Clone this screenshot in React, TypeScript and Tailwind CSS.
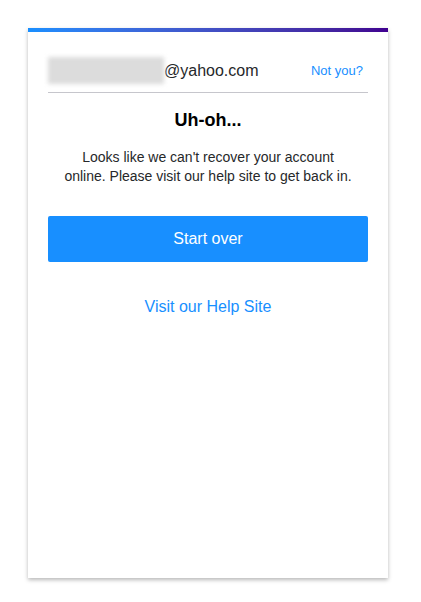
export default function App() {
  return (
    <div className="min-h-screen bg-white pt-[28px] pl-[28px] font-['Liberation_Sans',Arial,sans-serif]">
      <div className="w-[360px] h-[550px] bg-white shadow-[0_2px_4px_rgba(0,0,0,0.28)] flex flex-col">
        <div className="h-1 bg-gradient-to-r from-[#188fff] to-[#400090]" />
        <div className="px-5 pt-[25px] flex flex-col">
          <div className="flex items-center justify-between h-[27px]">
            <div className="flex items-center">
              <div className="w-[116px] h-[27px] bg-[#dcdcdc] blur-[2px]" />
              <span className="text-[16px] text-[#26282a] leading-[27px]">@yahoo.com</span>
            </div>
            <a className="text-[13px] text-[#188fff] mr-[5px]">Not you?</a>
          </div>
          <div className="mt-2 border-b border-[#c6c6cc]" />
          <h1 className="mt-4 text-center text-[18px] leading-[22px] font-bold text-[#000]">Uh-oh...</h1>
          <p className="mt-[17px] text-center text-[14px] leading-[19px] text-[#26282a]">
            Looks like we can't recover your account
            <br />
            online. Please visit our help site to get back in.
          </p>
          <button className="mt-[30px] h-[46px] w-full rounded-[2px] bg-[#188fff] text-white text-[16px]">
            Start over
          </button>
          <a className="mt-[35px] text-center text-[16px] leading-[20px] text-[#188fff]">Visit our Help Site</a>
        </div>
      </div>
    </div>
  )
}
